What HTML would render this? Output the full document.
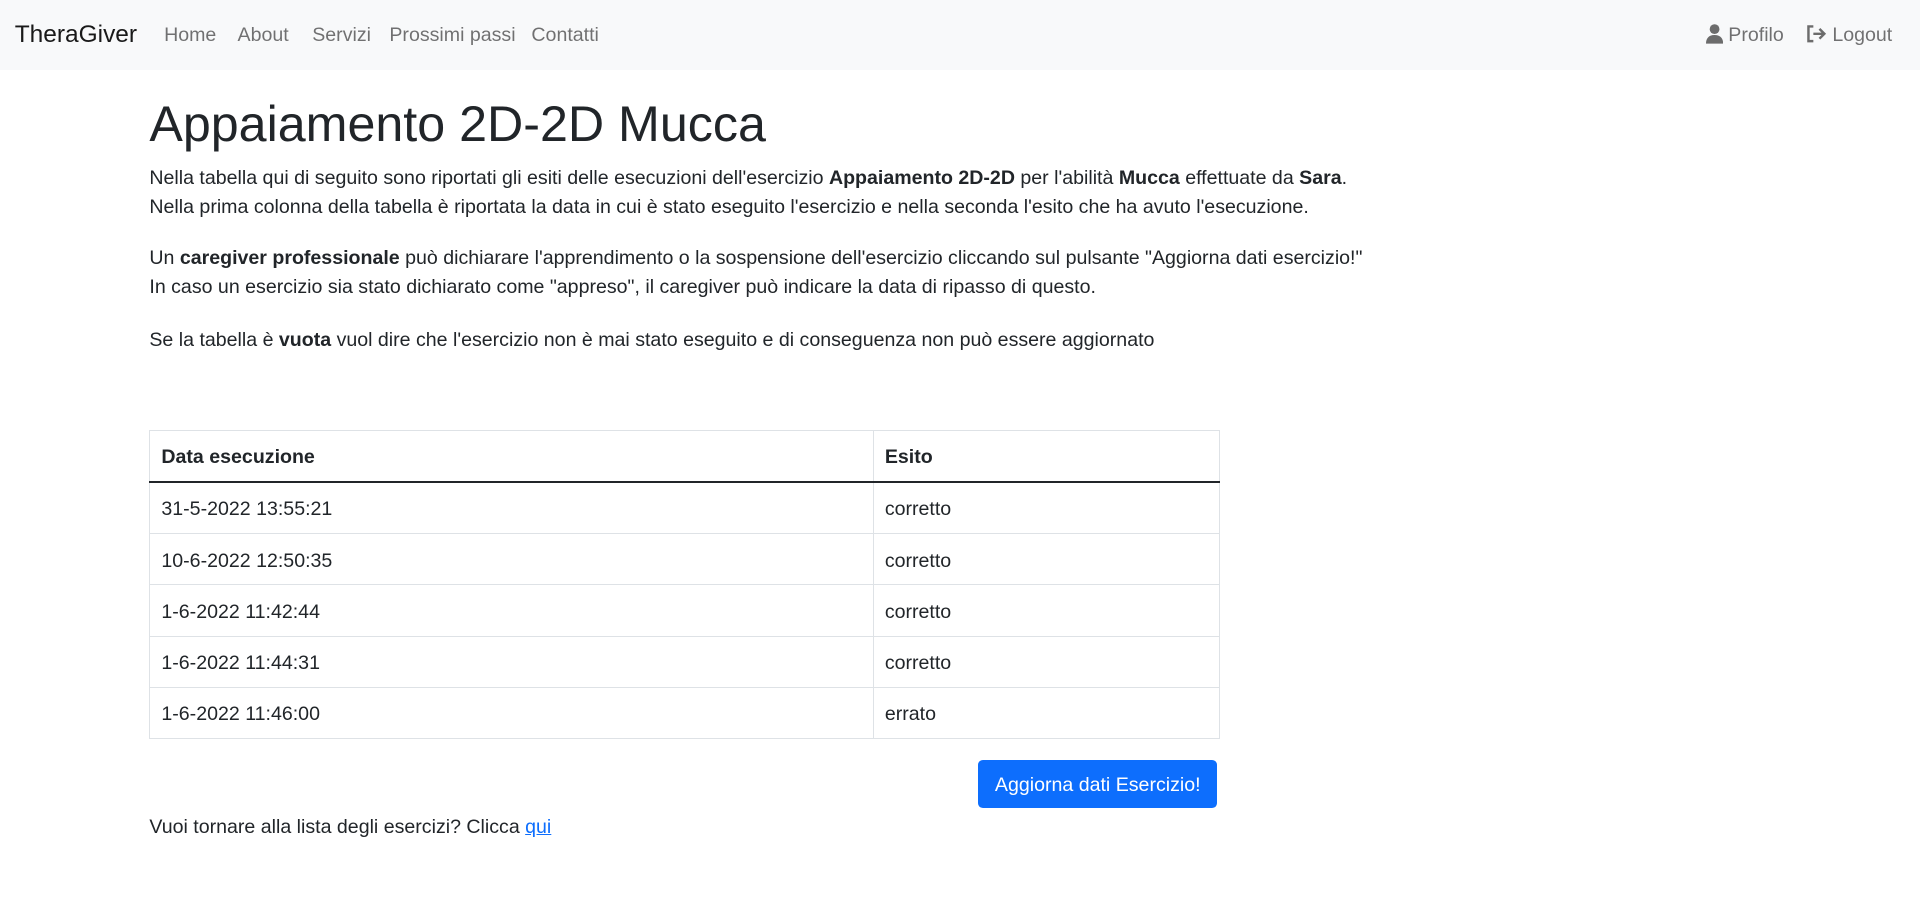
<!DOCTYPE html>
<html><head><meta charset="utf-8">
<style>
html{zoom:1.22449}
body{margin:0;font-family:"Liberation Sans",sans-serif;color:#212529;font-size:16px;background:#fff;width:1568px;height:750px;position:relative;overflow:hidden}
.nav{position:absolute;left:0;top:0;width:1568px;height:57px;background:#f8f9fa}
.nav span{position:absolute;top:20px;font-size:16px;color:rgba(0,0,0,.55);white-space:nowrap}
.brand{position:absolute;left:12px;top:17px;font-size:20px;color:rgba(0,0,0,.9)}
h1{position:absolute;left:122px;top:77px;margin:0;font-size:41px;font-weight:500;line-height:1.2;white-space:nowrap}
.p{position:absolute;left:122px;line-height:24px;white-space:nowrap;font-size:16px}
table{position:absolute;left:122px;top:351px;width:874px;border-collapse:collapse;font-size:16px}
td,th{border:1px solid #dee2e6;padding:3px 9px 0;height:38px;text-align:left}
th{font-weight:bold;border-bottom:2px solid #212529}
td:first-child,th:first-child{width:572px}
.btn{position:absolute;left:799px;top:621px;width:195px;height:39px;background:#0d6efd;color:#fff;border-radius:4px;text-align:center;line-height:41px;font-size:16px}
a{color:#0d6efd;text-decoration:underline}
</style></head><body>
<div class="nav">
<div class="brand">TheraGiver</div>
<span style="left:134px">Home</span>
<span style="left:194px">About</span>
<span style="left:255px">Servizi</span>
<span style="left:318px">Prossimi passi</span>
<span style="left:434px">Contatti</span>
<span style="left:1393px"><svg width="14" height="16" viewBox="0 0 14 16" style="vertical-align:-2px"><circle cx="7" cy="4.2" r="4" fill="#6c6c6c"/><path d="M0 16c0-4 2-7 7-7s7 3 7 7z" fill="#6c6c6c"/></svg> Profilo</span>
<span style="left:1475px"><svg width="17" height="16" viewBox="0 0 17 16" style="vertical-align:-2px"><path d="M6 2H2v12h4" fill="none" stroke="#6c6c6c" stroke-width="2"/><path d="M6 8h9M11 4l4 4-4 4" fill="none" stroke="#6c6c6c" stroke-width="2"/></svg> Logout</span>
</div>
<h1>Appaiamento 2D-2D Mucca</h1>
<div class="p" style="top:134px">Nella tabella qui di seguito sono riportati gli esiti delle esecuzioni dell'esercizio <b>Appaiamento 2D-2D</b> per l'abilità <b>Mucca</b> effettuate da <b>Sara</b>.<br>Nella prima colonna della tabella è riportata la data in cui è stato eseguito l'esercizio e nella seconda l'esito che ha avuto l'esecuzione.</div>
<div class="p" style="top:199px">Un <b>caregiver professionale</b> può dichiarare l'apprendimento o la sospensione dell'esercizio cliccando sul pulsante "Aggiorna dati esercizio!"<br>In caso un esercizio sia stato dichiarato come "appreso", il caregiver può indicare la data di ripasso di questo.</div>
<div class="p" style="top:266px">Se la tabella è <b>vuota</b> vuol dire che l'esercizio non è mai stato eseguito e di conseguenza non può essere aggiornato</div>
<table>
<tr><th>Data esecuzione</th><th>Esito</th></tr>
<tr><td>31-5-2022 13:55:21</td><td>corretto</td></tr>
<tr><td>10-6-2022 12:50:35</td><td>corretto</td></tr>
<tr><td>1-6-2022 11:42:44</td><td>corretto</td></tr>
<tr><td>1-6-2022 11:44:31</td><td>corretto</td></tr>
<tr><td>1-6-2022 11:46:00</td><td>errato</td></tr>
</table>
<div class="btn">Aggiorna dati Esercizio!</div>
<div class="p" style="top:664px">Vuoi tornare alla lista degli esercizi? Clicca <a>qui</a></div>
</body></html>
